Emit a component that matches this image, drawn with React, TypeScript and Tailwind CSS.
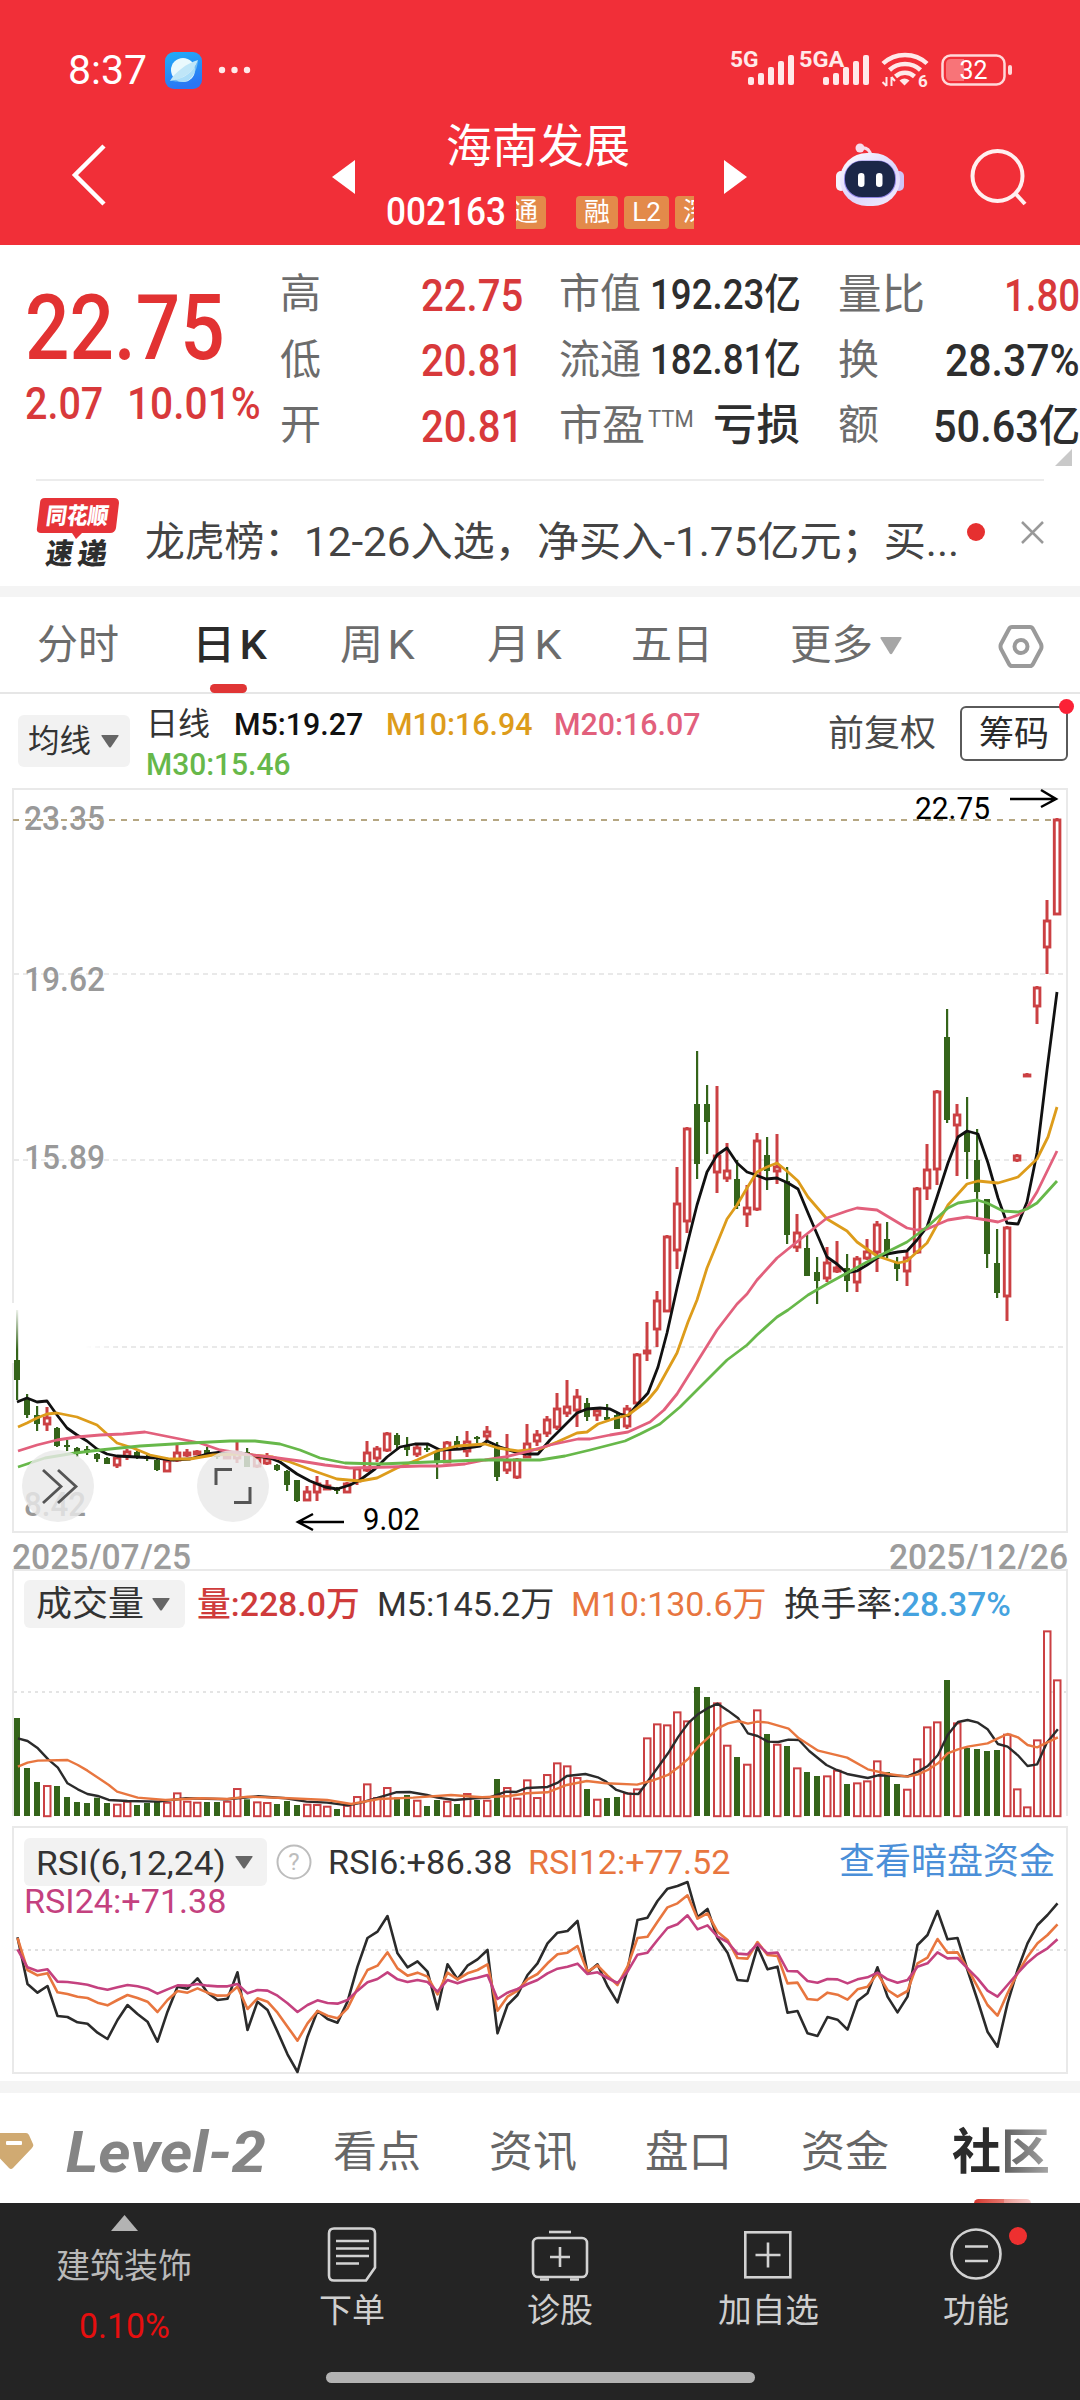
import React, { useLayoutEffect, useRef } from 'react';
import clsx from 'clsx';

// [direction, high, body top, body bottom, low], in chart pixels
type Candle = ['u' | 'd', number, number, number, number];

const CANDLES: Candle[] = [
  ['d', 1310, 1360, 1380, 1400], ['d', 1394, 1400, 1415, 1418], ['d', 1406, 1415, 1424, 1431], ['u', 1407, 1417, 1425, 1431],
  ['d', 1427, 1428, 1446, 1447], ['d', 1440, 1445, 1447, 1451], ['d', 1447, 1448, 1453, 1457], ['d', 1446, 1449, 1451, 1455],
  ['d', 1453, 1454, 1459, 1462], ['d', 1457, 1458, 1464, 1464], ['u', 1456, 1457, 1466, 1468], ['u', 1449, 1451, 1457, 1460],
  ['d', 1451, 1452, 1457, 1459], ['d', 1455, 1456, 1459, 1461], ['d', 1459, 1460, 1470, 1471], ['u', 1460, 1460, 1472, 1472],
  ['u', 1445, 1452, 1461, 1462], ['u', 1449, 1452, 1456, 1457], ['u', 1450, 1451, 1455, 1455], ['d', 1447, 1450, 1455, 1456],
  ['d', 1453, 1456, 1457, 1459], ['u', 1453, 1456, 1457, 1459], ['u', 1442, 1452, 1459, 1463], ['d', 1448, 1452, 1467, 1467],
  ['u', 1456, 1457, 1467, 1468], ['u', 1453, 1458, 1464, 1465], ['d', 1464, 1465, 1470, 1471], ['d', 1470, 1471, 1485, 1491],
  ['d', 1480, 1480, 1501, 1502], ['u', 1486, 1491, 1501, 1501], ['u', 1476, 1483, 1493, 1501], ['u', 1480, 1485, 1490, 1490],
  ['d', 1487, 1489, 1491, 1494], ['u', 1482, 1483, 1493, 1493], ['u', 1467, 1468, 1482, 1485], ['u', 1441, 1452, 1471, 1472],
  ['u', 1446, 1448, 1459, 1462], ['u', 1432, 1433, 1451, 1452], ['d', 1433, 1435, 1445, 1450], ['d', 1437, 1446, 1450, 1456],
  ['u', 1445, 1447, 1455, 1457], ['d', 1445, 1448, 1450, 1452], ['d', 1450, 1451, 1462, 1479], ['u', 1441, 1442, 1463, 1463],
  ['d', 1436, 1441, 1447, 1448], ['u', 1431, 1441, 1452, 1457], ['d', 1436, 1437, 1439, 1443], ['u', 1426, 1431, 1437, 1442],
  ['d', 1442, 1447, 1477, 1481], ['u', 1434, 1461, 1471, 1474], ['u', 1458, 1459, 1478, 1479], ['u', 1424, 1443, 1458, 1458],
  ['u', 1430, 1434, 1442, 1446], ['u', 1416, 1419, 1434, 1437], ['u', 1393, 1408, 1428, 1430], ['u', 1380, 1406, 1414, 1417],
  ['u', 1389, 1396, 1411, 1427], ['d', 1398, 1403, 1417, 1421], ['u', 1409, 1410, 1416, 1421], ['d', 1404, 1417, 1420, 1422],
  ['d', 1413, 1415, 1429, 1429], ['u', 1405, 1408, 1427, 1429], ['u', 1353, 1354, 1404, 1404], ['u', 1322, 1350, 1354, 1361],
  ['u', 1291, 1300, 1330, 1347], ['u', 1235, 1236, 1312, 1312], ['u', 1167, 1203, 1251, 1269], ['u', 1127, 1128, 1222, 1233],
  ['d', 1051, 1104, 1164, 1179], ['d', 1085, 1104, 1122, 1154], ['u', 1086, 1155, 1173, 1193], ['u', 1143, 1170, 1179, 1182],
  ['d', 1160, 1179, 1206, 1209], ['u', 1185, 1207, 1215, 1227], ['u', 1133, 1140, 1210, 1211], ['d', 1137, 1155, 1171, 1190],
  ['u', 1134, 1166, 1172, 1184], ['d', 1167, 1181, 1235, 1244], ['u', 1214, 1232, 1248, 1252], ['d', 1235, 1248, 1276, 1276],
  ['d', 1257, 1272, 1281, 1304], ['u', 1247, 1262, 1279, 1282], ['u', 1241, 1267, 1272, 1273], ['d', 1254, 1268, 1281, 1292],
  ['u', 1256, 1258, 1283, 1292], ['u', 1239, 1251, 1259, 1260], ['u', 1221, 1224, 1253, 1272], ['d', 1222, 1239, 1255, 1258],
  ['d', 1257, 1263, 1269, 1281], ['u', 1252, 1257, 1272, 1286], ['u', 1187, 1188, 1253, 1254], ['u', 1144, 1169, 1189, 1200],
  ['u', 1090, 1091, 1170, 1185], ['d', 1009, 1037, 1120, 1123], ['u', 1104, 1114, 1126, 1176], ['d', 1097, 1131, 1152, 1179],
  ['d', 1129, 1160, 1192, 1217], ['d', 1199, 1199, 1254, 1268], ['d', 1229, 1263, 1293, 1298], ['u', 1226, 1227, 1297, 1321],
  ['u', 1154, 1155, 1161, 1162], ['u', 1073, 1074, 1076, 1077], ['u', 986, 987, 1007, 1024], ['u', 900, 920, 948, 974],
  ['u', 818, 819, 915, 915],
];

const MA_LINES = [
  {
    color: '#111111',
    points:
      '17,1402 27,1398 37,1402 47,1401 57,1415 67,1428 77,1435 87,1441 97,1449 107,1454 117,1456 137,1457 157,1458 172,1460 190,1459 207,1454 222,1452 240,1453 257,1456 270,1458 280,1462 297,1474 310,1481 325,1487 337,1489 350,1485 360,1480 375,1469 387,1457 400,1447 415,1444 428,1444 440,1450 460,1449 480,1446 487,1441 500,1447 515,1452 525,1454 538,1454 550,1440 565,1425 577,1413 587,1409 600,1408 610,1409 620,1414 628,1416 637,1405 648,1393 658,1367 667,1333 677,1288 687,1245 697,1205 707,1172 717,1155 727,1148 737,1163 747,1172 753,1174 766,1179 777,1178 788,1183 798,1189 808,1213 817,1234 827,1257 837,1264 847,1273 857,1271 867,1265 877,1258 887,1254 898,1252 907,1251 917,1240 927,1227 937,1197 948,1163 958,1137 967,1131 978,1134 988,1163 998,1198 1007,1223 1018,1224 1027,1202 1037,1153 1047,1070 1057,992',
  },
  {
    color: '#dd9c1b',
    points:
      '18,1427 27,1423 37,1418 47,1414 57,1413 77,1417 97,1425 117,1443 133,1448 150,1455 170,1459 190,1459 213,1455 240,1454 273,1457 290,1462 317,1472 337,1479 360,1481 377,1478 397,1468 417,1460 437,1451 457,1446 485,1444 498,1448 518,1451 540,1449 557,1442 577,1433 587,1432 598,1424 613,1419 628,1415 647,1401 657,1389 677,1353 688,1322 697,1300 707,1268 727,1219 737,1205 747,1188 757,1172 767,1167 777,1163 788,1172 798,1181 808,1197 827,1219 847,1231 857,1242 877,1256 898,1263 907,1261 927,1243 948,1205 967,1184 978,1181 998,1183 1018,1177 1037,1159 1048,1137 1057,1107',
  },
  {
    color: '#e2607c',
    points:
      '18,1451 37,1445 57,1440 77,1437 100,1435 123,1434 145,1432 155,1434 180,1439 200,1443 220,1450 245,1454 270,1457 300,1461 325,1465 350,1468 390,1467 420,1466 440,1466 465,1464 485,1460 505,1457 530,1451 550,1445 578,1439 590,1439 610,1435 628,1432 650,1422 664,1410 677,1394 687,1378 697,1362 717,1330 737,1304 747,1294 757,1280 777,1258 798,1241 827,1218 847,1211 857,1208 877,1210 907,1228 917,1230 927,1229 948,1220 967,1217 987,1220 998,1222 1018,1215 1027,1208 1037,1192 1057,1151',
  },
  {
    color: '#67b84a',
    points:
      '18,1467 45,1458 75,1453 100,1450 140,1446 190,1443 230,1441 255,1441 280,1444 300,1450 320,1458 345,1463 380,1464 430,1462 480,1460 540,1460 565,1456 590,1450 625,1441 640,1434 660,1424 680,1407 692,1395 707,1380 727,1360 747,1345 757,1335 777,1317 788,1310 808,1295 827,1284 847,1273 867,1262 887,1252 907,1242 927,1227 948,1208 958,1203 977,1200 987,1203 1003,1211 1018,1212 1027,1209 1037,1203 1057,1181',
  },
];

// bar tops, three units per pixel
const VOLUMES = [
  594, 744, 786, 796, 798, 831, 846, 849, 833, 849, 852, 843, 855, 849, 846, 846, 818, 843, 846, 846, 846, 843, 805, 838, 845, 847,
  852, 843, 855, 852, 853, 858, 867, 855, 829, 791, 832, 802, 832, 825, 840, 858, 840, 843, 852, 820, 840, 840, 777, 802, 834, 779,
  832, 763, 728, 737, 772, 807, 837, 834, 831, 818, 806, 653, 611, 614, 575, 602, 501, 531, 548, 675, 711, 732, 569, 642, 672, 678,
  743, 756, 768, 767, 750, 792, 788, 782, 722, 756, 792, 807, 716, 620, 605, 480, 608, 684, 687, 693, 690, 642, 806, 860, 659, 332,
  479,
];

const VOLUME_M5 =
  '26,655 40,663 55,685 70,718 84,743 98,790 113,808 127,822 142,828 158,840 185,843 230,845 270,835 330,838 375,829 415,835 445,845 475,848 505,856 520,850 548,834 575,817 595,816 620,825 635,833 660,840 690,835 710,833 735,815 750,816 765,804 795,801 810,788 823,768 850,762 868,772 880,785 895,810 912,821 927,822 942,780 970,700 985,650 1000,608 1014,582 1030,562 1042,551 1057,572 1072,595 1086,640 1100,648 1115,665 1130,666 1145,659 1160,660 1175,693 1200,735 1215,750 1230,762 1260,774 1275,766 1318,769 1333,755 1347,738 1362,705 1376,645 1391,606 1405,600 1420,608 1434,628 1449,672 1463,680 1478,706 1492,738 1506,733 1520,668 1536,628';
const VOLUME_M10 =
  '26,740 40,728 55,722 98,720 113,735 127,752 158,795 170,815 200,833 240,840 290,835 330,837 360,830 420,835 475,840 510,852 550,837 600,833 655,825 700,832 740,828 765,820 795,817 823,795 852,783 880,790 925,794 950,780 970,765 985,742 1000,715 1014,680 1030,650 1042,625 1057,610 1072,603 1086,611 1100,605 1115,608 1145,626 1160,655 1188,692 1230,713 1260,748 1290,762 1318,770 1333,763 1347,750 1362,730 1376,700 1391,688 1405,680 1434,670 1449,655 1463,642 1478,652 1492,675 1506,682 1520,668 1536,652';

const RSI_LINES = [
  {
    color: '#2b2b2b',
    values: [
      352, 492, 518, 498, 588, 591, 607, 611, 638, 657, 600, 555, 582, 605, 665, 575, 500, 506, 475, 518, 540, 536, 457, 630, 545, 570,
      635, 703, 756, 650, 573, 597, 608, 545, 440, 354, 335, 288, 400, 442, 424, 455, 568, 433, 478, 437, 418, 390, 640, 555, 525, 465,
      430, 370, 338, 333, 303, 458, 433, 498, 547, 450, 300, 293, 243, 206, 198, 186, 292, 267, 355, 398, 480, 483, 380, 448, 440, 578,
      573, 640, 648, 591, 599, 629, 543, 520, 442, 530, 577, 530, 375, 345, 273, 358, 354, 450, 540, 635, 680, 550, 450, 370, 315, 285,
      250,
    ],
  },
  {
    color: '#e8763f',
    values: [
      354, 450, 466, 460, 517, 522, 530, 534, 548, 556, 540, 525, 534, 545, 576, 540, 513, 518, 505, 518, 527, 526, 500, 567, 535, 545,
      578, 620, 662, 610, 573, 587, 595, 565, 505, 450, 437, 397, 445, 467, 458, 470, 523, 458, 478, 460, 450, 433, 572, 530, 512, 478,
      462, 430, 403, 398, 378, 455, 436, 467, 495, 440, 354, 350, 305, 262, 250, 226, 296, 280, 335, 360, 414, 416, 366, 405, 408, 490,
      488, 537, 540, 518, 524, 539, 508, 500, 460, 510, 530, 513, 430, 413, 357, 398, 397, 445, 500, 555, 587, 520, 460, 410, 370, 345,
      313,
    ],
  },
  {
    color: '#c4417f',
    values: [
      388, 442, 453, 448, 485, 486, 490, 494, 503, 509, 502, 495, 499, 506, 521, 508, 496, 497, 492, 497, 499, 499, 492, 520, 510, 512,
      527, 550, 576, 555, 541, 549, 551, 540, 512, 487, 477, 457, 478, 486, 480, 486, 515, 480, 490, 480, 473, 465, 537, 518, 507, 492,
      480, 460, 446, 440, 431, 462, 457, 474, 489, 455, 404, 398, 360, 324, 313, 286, 328, 316, 350, 366, 401, 403, 372, 400, 398, 453,
      454, 483, 488, 477, 478, 490, 478, 472, 458, 478, 488, 480, 440, 430, 397, 415, 414, 445, 475, 512, 530, 495, 460, 428, 403, 385,
      358,
    ],
  },
];

const RED = '#cb4043';
const GREEN = '#34641a';

interface FitProps {
  className?: string;
  children: React.ReactNode;
}

// Squeezes a single line of text into the width of its box
const Fit: React.FC<FitProps> = ({ className, children }) => {
  const outer = useRef<HTMLSpanElement>(null);
  const inner = useRef<HTMLSpanElement>(null);

  useLayoutEffect(() => {
    if (outer.current && inner.current) {
      inner.current.style.transform = `scaleX(${outer.current.clientWidth / inner.current.offsetWidth})`;
    }
  });

  return (
    <span ref={outer} className={clsx('block shrink-0 whitespace-nowrap leading-none', className)}>
      <span ref={inner} className="inline-block origin-left">{children}</span>
    </span>
  );
};

const Caret = ({ className }: { className?: string }) => (
  <svg className={clsx('shrink-0', className)} viewBox="0 0 18 13" preserveAspectRatio="none">
    <path d="M1 0h16q1 0 .5 1L10 12q-1 1-2 0L.5 1Q0 0 1 0z" fill="currentColor" />
  </svg>
);

const SignalBars = ({ className }: { className?: string }) => (
  <svg className={clsx('shrink-0', className)} width="46" height="30" viewBox="0 0 46 30" fill="#ffe9e9">
    <rect x="0" y="22" width="6" height="8" rx="2" />
    <rect x="10" y="18" width="6" height="12" rx="2" />
    <rect x="20" y="12" width="6" height="18" rx="2" />
    <rect x="30" y="6" width="6" height="24" rx="2" />
    <rect x="40" y="0" width="6" height="30" rx="2" />
  </svg>
);

const StatusBar = () => (
  <div className="mt-[48px] flex h-[44px] items-center pl-[68px] text-white">
    <Fit className="w-[79px] text-[41px]">8:37</Fit>
    <svg className="ml-[18px] shrink-0" width="37" height="37" viewBox="0 0 37 37">
      <defs>
        <linearGradient id="app" x1="0" y1="0" x2="0.3" y2="1">
          <stop offset="0" stopColor="#22aef8" />
          <stop offset="1" stopColor="#2a76f4" />
        </linearGradient>
      </defs>
      <rect width="37" height="37" rx="9" fill="url(#app)" />
      <circle cx="18" cy="18" r="12" fill="#eaf9fd" />
      <path d="M33 8c-3 10-13 19-28 21 4-8 17-18 28-21z" fill="#bfe6f8" />
      <path d="M5 29c14-2 24-9 28-21-1 13-8 22-15 22-6 0-9-1-13-1z" fill="#8fd2f6" opacity="0.7" />
    </svg>
    <svg className="ml-[16px] shrink-0" width="34" height="8" viewBox="0 0 34 8" fill="#ffe9e9">
      <circle cx="4" cy="4" r="3.2" />
      <circle cx="16.500" cy="4" r="3.2" />
      <circle cx="29" cy="4" r="3.2" />
    </svg>
    <div className="ml-[478px] flex h-full items-start text-[#ffe9e9]">
      <Fit className="mt-px w-[29px] text-[22px] font-bold">5G</Fit>
      <SignalBars className="-ml-[11px] mt-[7px]" />
      <Fit className="ml-[5px] mt-px w-[45px] text-[22px] font-bold">5GA</Fit>
      <SignalBars className="-ml-[21px] mt-[7px]" />
    </div>
    <svg className="ml-[12px] shrink-0" width="48" height="38" viewBox="0 0 48 38" fill="none" stroke="#ffe9e9" strokeWidth="4.500">
      <path d="M2 12.500C14 1 34 1 46 12.500" />
      <path d="M8.500 19C17 11 31 11 39.500 19" />
      <path d="M14.500 25.500c5.500-5 13.500-5 19 0" />
      <path d="M18.500 29.500q5-4 10 0l-5 5z" fill="#ffe9e9" stroke="none" />
      <path d="M5.500 26v9M1.500 31l4 4M10.500 35v-9M14 30l-3.500-4" strokeWidth="2" />
      <text x="37" y="36" fontSize="17" fontWeight="700" fill="#ffe9e9" stroke="none">6</text>
    </svg>
    <svg className="ml-[12px] shrink-0" width="72" height="32" viewBox="0 0 72 32">
      <rect x="1.500" y="1.500" width="62" height="29" rx="8" fill="none" stroke="#ffd9d9" strokeWidth="2.500" />
      <path d="M10 5h13v22H10q-5 0-5-5V10q0-5 5-5z" fill="#f87478" />
      <rect x="67" y="11" width="4" height="10" rx="2" fill="#ffd9d9" />
      <text x="18.500" y="25" fontSize="25" textLength="28" lengthAdjust="spacingAndGlyphs" fill="#ffffff">32</text>
    </svg>
  </div>
);

const Robot = () => (
  <svg className="shrink-0" width="68" height="64" viewBox="0 0 68 64">
    <defs>
      <linearGradient id="shell" x1="0" y1="0" x2="0.8" y2="1">
        <stop offset="0" stopColor="#ffffff" />
        <stop offset="0.6" stopColor="#dcd5fb" />
        <stop offset="1" stopColor="#efeafd" />
      </linearGradient>
    </defs>
    <path d="M24 5c7-1 10 2 11 8" fill="none" stroke="#f6ddec" strokeWidth="3" />
    <circle cx="24" cy="5" r="4.500" fill="#f6ddec" />
    <rect x="0" y="28" width="10" height="20" rx="5" fill="#f5f3fe" />
    <rect x="58" y="28" width="10" height="20" rx="5" fill="#cfc3f5" />
    <rect x="4" y="10" width="60" height="53" rx="27" fill="url(#shell)" />
    <rect x="8" y="17.500" width="52" height="37.500" rx="18" fill="#8f84e6" />
    <rect x="9" y="18" width="50" height="36" rx="17" fill="#1b2748" />
    <rect x="22" y="30" width="6.500" height="14" rx="3.200" fill="#fff" />
    <rect x="40" y="30" width="6.500" height="14" rx="3.200" fill="#fff" />
  </svg>
);

const Header = () => (
  <header className="flex h-[245px] flex-col bg-[#f12f38]">
    <StatusBar />
    <div className="flex flex-1 items-start text-white">
      <svg className="ml-[70px] mt-[51px] shrink-0" width="38" height="64" viewBox="0 0 38 64" fill="none" stroke="#fff" strokeWidth="4.500">
        <path d="M34 3L5 32l29 29" />
      </svg>
      <svg className="ml-[224px] mt-[68px] shrink-0" width="23" height="34" viewBox="0 0 23 34" fill="#fff">
        <path d="M23 0v34L0 17z" />
      </svg>
      <div className="ml-[31px] mt-[31px] flex w-[308px] flex-col">
        <h1 className="ml-[60px] text-[46px] leading-[46px]">海南发展</h1>
        <div className="mt-[25px] flex h-[36px] items-center">
          <Fit className="w-[120px] text-[39px] font-medium">002163</Fit>
          <div className="ml-[10px] flex h-[33px] w-[178px] overflow-hidden text-[26px] leading-[33px]">
            <span className="-ml-[12px] w-[42px] shrink-0 rounded-[4px] bg-[#e38a4a] text-center">通</span>
            <span className="ml-[30px] w-[42px] shrink-0 rounded-[4px] bg-[#e38a4a] text-center">融</span>
            <span className="ml-[6px] w-[45px] shrink-0 rounded-[4px] bg-[#e38a4a] text-center">L2</span>
            <span className="ml-[6px] w-[42px] shrink-0 rounded-[4px] bg-[#e38a4a] text-center">深</span>
          </div>
        </div>
      </div>
      <svg className="ml-[30px] mt-[68px] shrink-0" width="23" height="34" viewBox="0 0 23 34" fill="#fff">
        <path d="M0 0v34l23-17z" />
      </svg>
      <div className="ml-[89px] mt-[51px]">
        <Robot />
      </div>
      <svg className="ml-[65px] mt-[56px] shrink-0" width="60" height="60" viewBox="0 0 60 60" fill="none" stroke="#fff0f0" strokeWidth="4">
        <circle cx="28.500" cy="28" r="25" />
        <path d="M46 45l10 11" />
      </svg>
    </div>
  </header>
);

const label = 'text-[41px] leading-none text-[#6c6c6c]';

const Quote = () => (
  <section className="relative flex h-[234px] pt-[17px]">
    <div className="w-[280px] pl-[25px] text-[#e23232]">
      <Fit className="mt-[22px] w-[200px] text-[90px] font-medium">22.75</Fit>
      <div className="mt-[8px] flex font-medium text-[#d8393b]">
        <Fit className="w-[78px] text-[44px]">2.07</Fit>
        <Fit className="ml-[24px] w-[134px] text-[44px]">10.01%</Fit>
      </div>
    </div>
    <div className="flex w-[279px] flex-col">
      {[['高', '22.75'], ['低', '20.81'], ['开', '20.81']].map(([name, value]) => (
        <div key={name} className="flex h-[65.500px] items-center">
          <span className={label}>{name}</span>
          <Fit className="ml-[100px] w-[102px] pt-[2px] text-[44px] font-medium text-[#d8393b]">{value}</Fit>
        </div>
      ))}
    </div>
    <div className="flex w-[279px] flex-col text-[#2e2e2e]">
      <div className="flex h-[65.500px] items-center">
        <Fit className="w-[82px] text-[41px] text-[#6c6c6c]">市值</Fit>
        <Fit className="ml-[9px] w-[151px] text-[42px] font-medium">192.23亿</Fit>
      </div>
      <div className="flex h-[65.500px] items-center">
        <Fit className="w-[82px] text-[41px] text-[#6c6c6c]">流通</Fit>
        <Fit className="ml-[9px] w-[151px] text-[42px] font-medium">182.81亿</Fit>
      </div>
      <div className="flex h-[65.500px] items-center">
        <Fit className="w-[86px] text-[42px] text-[#6c6c6c]">市盈</Fit>
        <Fit className="mb-[12px] ml-[3px] w-[46px] text-[23px] text-[#6c6c6c]">TTM</Fit>
        <Fit className="ml-[19px] w-[87px] text-[43px] font-medium">亏损</Fit>
      </div>
    </div>
    <div className="flex flex-1 flex-col">
      <div className="flex h-[65.500px] items-center justify-between">
        <Fit className="w-[87px] text-[42px] text-[#6c6c6c]">量比</Fit>
        <Fit className="w-[76px] pt-[2px] text-[44px] font-medium text-[#d8393b]">1.80</Fit>
      </div>
      <div className="flex h-[65.500px] items-center justify-between text-[#2e2e2e]">
        <span className={label}>换</span>
        <Fit className="w-[135px] pt-[2px] text-[44px] font-medium">28.37%</Fit>
      </div>
      <div className="flex h-[65.500px] items-center justify-between text-[#2e2e2e]">
        <span className={label}>额</span>
        <Fit className="w-[147px] pt-[2px] text-[44px] font-medium">50.63亿</Fit>
      </div>
    </div>
    <svg className="absolute bottom-[13px] right-[8px]" width="17" height="17" viewBox="0 0 17 17">
      <path d="M17 0v17H0z" fill="#c9c9c9" />
    </svg>
  </section>
);

const News = () => (
  <section className="flex h-[107px] items-start">
    <svg className="ml-[36px] mt-[19px] shrink-0" width="84" height="70" viewBox="0 0 84 70">
      <path d="M9 0h69q5 0 5 5l-3 25q-1 5-6 5H46l-6 6-4-6H5q-5 0-4-5L4 5q0-5 5-5z" fill="#e63338" />
      <g transform="skewX(-8)" fontFamily="'Noto Sans CJK SC', sans-serif" fontWeight="900">
        <text x="13" y="26" fontSize="23" textLength="62" lengthAdjust="spacingAndGlyphs" fill="#fff">同花顺</text>
        <text x="18" y="66" fontSize="29" textLength="27" lengthAdjust="spacingAndGlyphs" fill="#2e2e2e">速</text>
        <text x="50" y="66" fontSize="29" textLength="29" lengthAdjust="spacingAndGlyphs" fill="#2e2e2e">递</text>
      </g>
    </svg>
    <div className="ml-[25px] mt-[43px] flex w-[814px] text-[41px] text-[#444]">
      <Fit className="w-[159px]">龙虎榜：</Fit>
      <Fit className="w-[655px]">12-26入选，净买入-1.75亿元；买...</Fit>
    </div>
    <span className="ml-[8px] mt-[44px] h-[18px] w-[18px] shrink-0 rounded-full bg-[#e63030]" />
    <svg className="ml-[36px] mt-[42px] shrink-0" width="23" height="23" viewBox="0 0 23 23" stroke="#999" strokeWidth="2.500">
      <path d="M1 1l21 21M22 1L1 22" />
    </svg>
  </section>
);

const PeriodTabs = () => (
  <nav className="flex h-[97px] items-start border-b-2 border-[#e6e6e6] pl-[37px] pt-[28px] text-[41px] leading-none text-[#6c6c6c]">
    <Fit className="w-[82px]">分时</Fit>
    <div className="ml-[73px] flex w-[75px] flex-col items-center">
      <Fit className="w-[75px] font-medium text-[#2b2b2b]">日<span className="ml-[4px]">K</span></Fit>
      <span className="mr-[2px] mt-[18px] h-[9px] w-[37px] rounded-full bg-[#e03535]" />
    </div>
    <Fit className="ml-[73px] w-[75px]">周<span className="ml-[4px]">K</span></Fit>
    <Fit className="ml-[72px] w-[75px]">月<span className="ml-[4px]">K</span></Fit>
    <Fit className="ml-[69px] w-[82px]">五日</Fit>
    <Fit className="ml-[77px] w-[83px]">更多</Fit>
    <Caret className="ml-[7px] mt-[12px] h-[18px] w-[22px] text-[#a6a6a6]" />
    <svg className="ml-[96px] shrink-0" width="46" height="44" viewBox="0 0 46 44" fill="none" stroke="#9a9a9a" strokeWidth="4">
      <path d="M14 2h18q2 0 3 2l8 15q1 3 0 5l-8 15q-1 2-3 2H14q-2 0-3-2L3 24q-1-3 0-5l8-15q1-2 3-2z" />
      <circle cx="23" cy="21.500" r="6.500" />
    </svg>
  </nav>
);

const MaLegend = () => (
  <section className="flex h-[91px] items-start">
    <div className="ml-[18px] mt-[21px] flex h-[52px] w-[112px] items-center rounded-[6px] bg-[#f2f2f2] pl-[10px] text-[#333]">
      <Fit className="w-[63px] text-[32px]">均线</Fit>
      <Caret className="ml-[10px] h-[13px] w-[18px] text-[#666]" />
    </div>
    <div className="ml-[16px] mt-[12px] w-[640px] text-[32px]">
      <div className="flex h-[36px] items-center font-medium">
        <Fit className="w-[64px] font-normal text-[#333]">日线</Fit>
        <Fit className="ml-[24px] w-[129px] text-[#111]">M5:19.27</Fit>
        <Fit className="ml-[23px] w-[146px] text-[#dd9c1b]">M10:16.94</Fit>
        <Fit className="ml-[22px] w-[146px] text-[#e2607c]">M20:16.07</Fit>
      </div>
      <Fit className="mt-[6px] w-[144px] font-medium text-[#67b84a]">M30:15.46</Fit>
    </div>
    <Fit className="ml-[42px] mt-[22px] w-[108px] text-[36px] text-[#4a4a4a]">前复权</Fit>
    <div className="relative ml-[24px] mt-[12px] flex h-[55px] w-[108px] items-center justify-center rounded-[6px] border-2 border-[#5a5a5a] pt-px text-[35px] leading-none text-[#2b2b2b]">
      筹码
      <span className="absolute -right-[8px] -top-[9px] h-[15px] w-[15px] rounded-full bg-[#fb2136]" />
    </div>
  </section>
);

const KLineChart = () => (
  <svg className="block" width="1080" height="784" viewBox="0 785 1080 784">
    <defs>
      <linearGradient id="wick" x1="0" y1="0" x2="0" y2="1">
        <stop offset="0" stopColor="#fff" />
        <stop offset="1" stopColor="#fff" stopOpacity="0" />
      </linearGradient>
      <linearGradient id="edge" x1="0" y1="0" x2="1" y2="0">
        <stop offset="0.7" stopColor="#fff" />
        <stop offset="1" stopColor="#fff" stopOpacity="0" />
      </linearGradient>
    </defs>
    <rect x="13" y="789" width="1054" height="743" fill="none" stroke="#e9e9e9" strokeWidth="2" />
    {[974, 1160, 1347].map((y) => (
      <line key={y} x1="14" x2="1066" y1={y} y2={y} stroke="#e2e2e2" strokeWidth="1.500" strokeDasharray="5 4" />
    ))}
    <rect x="8" y="1303" width="110" height="60" fill="url(#edge)" />
    <g fontSize="33" fontWeight="500" fill="#999">
      <text x="24" y="830" textLength="81" lengthAdjust="spacingAndGlyphs">23.35</text>
      <text x="24" y="991" textLength="81" lengthAdjust="spacingAndGlyphs">19.62</text>
      <text x="24" y="1169" textLength="81" lengthAdjust="spacingAndGlyphs">15.89</text>
      <text x="24" y="1516" textLength="62" lengthAdjust="spacingAndGlyphs">8.42</text>
    </g>
    <line x1="13" x2="1052" y1="820" y2="820" stroke="#b5a682" strokeWidth="2" strokeDasharray="6 6" />
    {CANDLES.map(([dir, high, top, bottom, low], i) => {
      const x = 17 + i * 10;
      return dir === 'd' ? (
        <g key={i} fill={GREEN}>
          <rect x={x - 1} y={high} width="2.200" height={low - high} />
          <rect x={x - 3} y={top} width="6" height={bottom - top} />
        </g>
      ) : (
        <g key={i}>
          <rect x={x - 1.500} y={high} width="3" height={low - high} fill={RED} />
          <rect x={x - 2.700} y={top + 1} width="5.600" height={Math.max(bottom - top - 2, 1)} fill="#fff" stroke={RED} strokeWidth="2.900" />
        </g>
      );
    })}
    <rect x="12" y="1306" width="10" height="44" fill="url(#wick)" />
    {MA_LINES.map((line) => (
      <polyline key={line.color} points={line.points} fill="none" stroke={line.color} strokeWidth="2.800" strokeLinejoin="round" />
    ))}
    <g fill="none" stroke="#000" strokeWidth="2.500">
      <path d="M1010 799h46M1041 790l15 9-15 8" />
      <path d="M344 1522h-46M313 1514l-15 8 15 8" />
    </g>
    <text x="915" y="819" fontSize="32" textLength="75" lengthAdjust="spacingAndGlyphs" fill="#000">22.75</text>
    <text x="363" y="1530" fontSize="31" textLength="57" lengthAdjust="spacingAndGlyphs" fill="#000">9.02</text>
    <circle cx="58" cy="1486" r="36" fill="#e9e9e9" opacity="0.82" />
    <path d="M43 1470l18 16.500-18 16.500M58 1470l18 16.500-18 16.500" fill="none" stroke="#555" strokeWidth="2.800" />
    <circle cx="233" cy="1486" r="36" fill="#e9e9e9" opacity="0.82" />
    <path d="M216 1485v-15.500h16M250 1487v15.500h-16" fill="none" stroke="#555" strokeWidth="3" />
    <g fontSize="35" fontWeight="500" fill="#9c9c9c">
      <text x="12" y="1569" textLength="179" lengthAdjust="spacingAndGlyphs">2025/07/25</text>
      <text x="889" y="1569" textLength="179" lengthAdjust="spacingAndGlyphs">2025/12/26</text>
    </g>
  </svg>
);

const VolumeChart = () => (
  <section className="relative h-[253px]">
    <svg className="absolute inset-0" width="1080" height="253" viewBox="0 1569 1080 253">
      <path d="M13 1816V1570H1067V1816" fill="none" stroke="#e9e9e9" strokeWidth="2" />
      <line x1="14" x2="1066" y1="1692" y2="1692" stroke="#e4e4e4" strokeWidth="2" strokeDasharray="3 4" />
      {VOLUMES.map((v, i) => {
        const x = 17 + i * 10;
        const y = 1520 + v / 3;
        return CANDLES[i][0] === 'd' ? (
          <rect key={i} x={x - 3} y={y} width="6" height={1816 - y} fill={GREEN} />
        ) : (
          <rect key={i} x={x - 3} y={y + 0.700} width="6.500" height={1815.500 - y} fill="#fff" stroke={RED} strokeWidth="2" />
        );
      })}
      <g transform="translate(0 1520) scale(0.6887 0.3333)" fill="none" strokeWidth="2.400" strokeLinejoin="round">
        <polyline points={VOLUME_M5} stroke="#2b2b2b" vectorEffect="non-scaling-stroke" />
        <polyline points={VOLUME_M10} stroke="#e8763f" vectorEffect="non-scaling-stroke" />
      </g>
    </svg>
    <div className="relative flex items-center pt-[11px] text-[34px] text-[#333]">
      <div className="ml-[24px] flex h-[48px] w-[161px] items-center rounded-[6px] bg-[#f2f2f2] pl-[12px] pt-px">
        <Fit className="w-[108px] text-[35px]">成交量</Fit>
        <Caret className="ml-[8px] h-[13px] w-[18px] text-[#666]" />
      </div>
      <Fit className="ml-[12px] w-[163px] font-medium text-[#cf3b3b]">量:228.0万</Fit>
      <Fit className="ml-[17px] w-[177px]">M5:145.2万</Fit>
      <Fit className="ml-[17px] w-[196px] text-[#e8763f]">M10:130.6万</Fit>
      <Fit className="ml-[17px] w-[117px]">换手率:</Fit>
      <Fit className="w-[110px] font-medium text-[#45a3e0]">28.37%</Fit>
    </div>
  </section>
);

const RsiChart = () => (
  <section className="relative h-[259px]">
    <svg className="absolute inset-0" width="1080" height="259" viewBox="0 1822 1080 259">
      <rect x="13" y="1827" width="1054" height="246" fill="none" stroke="#e9e9e9" strokeWidth="2" />
      <line x1="14" x2="1066" y1="1950" y2="1950" stroke="#e0e0e0" strokeWidth="2" strokeDasharray="3 4" />
      {RSI_LINES.map((line) => (
        <polyline
          key={line.color}
          points={line.values.map((v, i) => `${17.5 + i * 10},${1820 + v / 3}`).join(' ')}
          fill="none"
          stroke={line.color}
          strokeWidth="2.600"
          strokeLinejoin="round"
        />
      ))}
    </svg>
    <div className="relative flex items-center pt-[16px] text-[34px] text-[#333]">
      <div className="ml-[24px] flex h-[48px] w-[243px] items-center rounded-[6px] bg-[#f2f2f2] pl-[12px] pt-px">
        <Fit className="w-[190px] text-[34px]">RSI(6,12,24)</Fit>
        <Caret className="ml-[9px] h-[13px] w-[18px] text-[#666]" />
      </div>
      <svg className="ml-[9px] shrink-0" width="36" height="36" viewBox="0 0 36 36">
        <circle cx="18" cy="18" r="16.500" fill="none" stroke="#bdbdbd" strokeWidth="2" />
        <text x="18" y="26" fontSize="24" textAnchor="middle" fill="#bdbdbd">?</text>
      </svg>
      <Fit className="ml-[16px] w-[184px]">RSI6:+86.38</Fit>
      <Fit className="ml-[16px] w-[203px] text-[#e8763f]">RSI12:+77.52</Fit>
      <Fit className="ml-[108px] w-[216px] text-[36px] text-[#4b8fd8]">查看暗盘资金</Fit>
    </div>
    <Fit className="relative -mt-[2px] ml-[24px] w-[203px] text-[34px] text-[#c4417f]">RSI24:+71.38</Fit>
  </section>
);

const InfoTabs = () => (
  <nav className="relative flex h-[110px] items-center overflow-hidden pt-[9px] text-[43px] leading-none text-[#666]">
    <svg className="-ml-[12px] mb-[4px] shrink-0" width="46" height="36" viewBox="0 0 46 36">
      <path d="M8 0h30q2 0 3 2l4 9q1 2-1 4L25 35q-2 2-4 0L2 15q-2-2-1-4l4-9q1-2 3-2z" fill="#d0aa72" />
      <rect x="18" y="8" width="16" height="4" rx="1" fill="#fff" />
    </svg>
    <Fit className="ml-[32px] w-[200px] text-[57px] font-bold italic text-[#858585]">Level-2</Fit>
    <Fit className="ml-[67px] w-[88px]">看点</Fit>
    <Fit className="ml-[68px] w-[88px]">资讯</Fit>
    <Fit className="ml-[68px] w-[87px]">盘口</Fit>
    <Fit className="ml-[69px] w-[88px]">资金</Fit>
    <Fit className="ml-[63px] w-[98px] text-[49px] font-bold text-[#2b2b2b]">社区</Fit>
    <span className="absolute -bottom-[5px] left-[974px] h-[9px] w-[57px] rounded-full bg-gradient-to-r from-[#d5352f] to-[#f0a8a5]" />
    <span className="absolute right-0 top-0 h-full w-[76px] bg-gradient-to-r from-white/25 to-white/80" />
  </nav>
);

const ActionBar = () => (
  <footer className="relative h-[197px] bg-[#242424] text-[33px] leading-none text-[#cfcfcf]">
    <div className="flex items-start">
      <div className="flex w-[248px] flex-col items-center pt-[12px]">
        <svg width="27" height="16" viewBox="0 0 27 16">
          <path d="M13.500 0L27 16H0z" fill="#b3b3b3" />
        </svg>
        <Fit className="mt-[18px] w-[136px] text-[34px] text-[#b9b9b9]">建筑装饰</Fit>
        <Fit className="mt-[26px] w-[91px] text-[35px] text-[#e60f0f]">0.10%</Fit>
      </div>
      <div className="flex w-[208px] flex-col items-center pt-[24px]">
        <svg width="50" height="55" viewBox="0 0 50 55" fill="none" stroke="#d2d2d2" strokeWidth="2.600">
          <path d="M7 1.500h36q5 0 5 5v34L39 53.500H7q-5 0-5-5v-42q0-5 5-5z" />
          <path d="M9 14h33M9 21.500h33M9 29h33M9 36.500h23" />
        </svg>
        <Fit className="mt-[12px] w-[66px]">下单</Fit>
      </div>
      <div className="flex w-[208px] flex-col items-center pt-[27px]">
        <svg width="60" height="52" viewBox="0 0 60 52" fill="none" stroke="#d2d2d2" strokeWidth="2.600">
          <path d="M19 2h22" />
          <rect x="3" y="8" width="54" height="39" rx="5" />
          <path d="M30 17v20M20 27h20M10 49.500h9M40 49.500h9" />
        </svg>
        <Fit className="mt-[12px] w-[66px]">诊股</Fit>
      </div>
      <div className="flex w-[208px] flex-col items-center pt-[28px]">
        <svg width="48" height="48" viewBox="0 0 48 48" fill="none" stroke="#d2d2d2" strokeWidth="2.600">
          <rect x="1.300" y="1.300" width="45" height="45" />
          <path d="M24 11.500v25M11.500 24h25" />
        </svg>
        <Fit className="mt-[15px] w-[101px]">加自选</Fit>
      </div>
      <div className="relative flex w-[208px] flex-col items-center pt-[25px]">
        <svg width="52" height="52" viewBox="0 0 52 52" fill="none" stroke="#d2d2d2" strokeWidth="2.600">
          <circle cx="26" cy="26" r="24.500" />
          <path d="M15 18.500h23M15 33h23" />
        </svg>
        <span className="absolute left-[137px] top-[24px] h-[18px] w-[18px] rounded-full bg-[#ee3030]" />
        <Fit className="mt-[14px] w-[66px]">功能</Fit>
      </div>
    </div>
    <span className="absolute left-[326px] top-[169px] h-[11px] w-[429px] rounded-full bg-[#b3b3b3]" />
  </footer>
);

const App: React.FC = () => (
  <div className="flex h-[2400px] w-[1080px] flex-col overflow-hidden bg-white font-[Roboto,'Noto_Sans_CJK_SC',sans-serif]">
    <Header />
    <Quote />
    <div className="relative h-0">
      <div className="absolute left-[36px] h-[2px] w-[1008px] bg-[#ececec]" />
    </div>
    <News />
    <div className="h-[11px] bg-[#f4f4f4]" />
    <PeriodTabs />
    <MaLegend />
    <KLineChart />
    <VolumeChart />
    <RsiChart />
    <div className="h-[12px] bg-[#f4f4f4]" />
    <InfoTabs />
    <ActionBar />
  </div>
);

export default App;
